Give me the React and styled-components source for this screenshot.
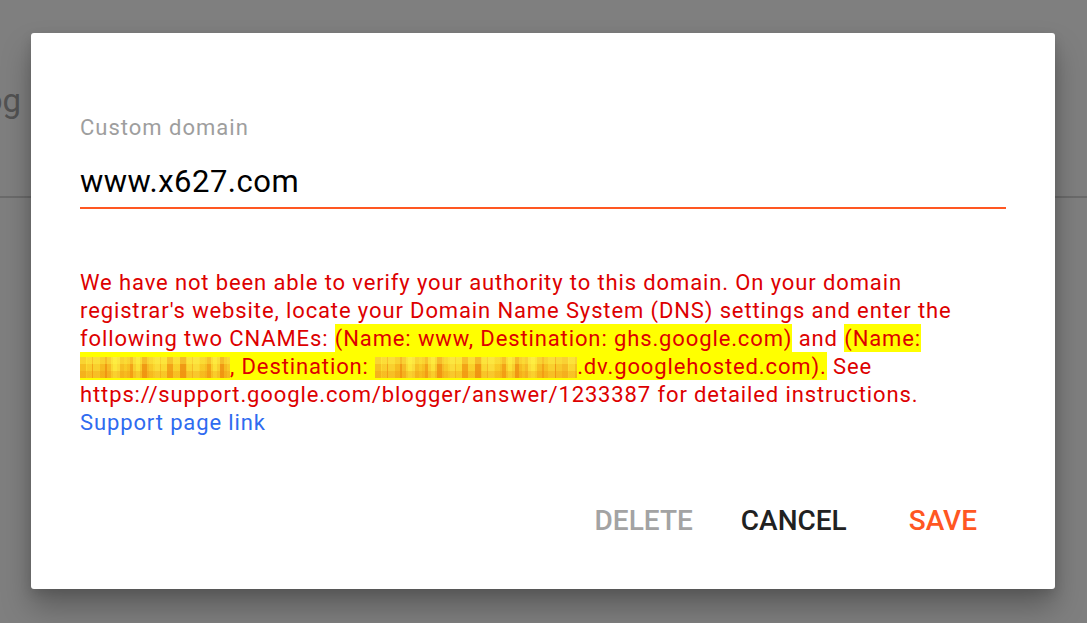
import React from "react";
import styled, { createGlobalStyle } from "styled-components";

const GlobalStyle = createGlobalStyle`
  html, body { margin: 0; padding: 0; }
  body {
    background: #ffffff;
    font-family: Roboto, "Noto Sans", "Liberation Sans", sans-serif;
    overflow: hidden;
  }
`;

const Page = styled.div`
  width: 1087px;
  height: 623px;
  background: #ffffff;
  position: relative;
  overflow: hidden;
`;

const PageHeader = styled.header`
  height: 196px;
  display: flex;
  align-items: center;
  border-bottom: 2px solid #d6d6d6;
`;

const PageTitle = styled.div`
  width: 21px;
  display: flex;
  justify-content: flex-end;
  overflow: hidden;
  white-space: nowrap;
  font-size: 33px;
  color: #a4a4a4;
  padding-top: 4px;
`;

const Scrim = styled.div`
  position: absolute;
  inset: 0;
  background: rgba(0, 0, 0, 0.5);
  display: flex;
  align-items: flex-start;
  padding: 33px 32px 0 31px;
`;

const Dialog = styled.div`
  width: 1024px;
  box-sizing: border-box;
  background: #ffffff;
  border-radius: 3px;
  padding: 82px 49px 50px;
  box-shadow: 0 18px 30px rgba(0, 0, 0, 0.28), 0 4px 12px rgba(0, 0, 0, 0.12);
  display: flex;
  flex-direction: column;
`;

const Label = styled.label`
  font-size: 22px;
  line-height: 26px;
  letter-spacing: 1px;
  color: #9e9e9e;
`;

const Input = styled.input`
  margin-top: 23px;
  height: 36px;
  padding: 0 0 7px;
  border: none;
  border-bottom: 2px solid #ff5722;
  outline: none;
  font-family: inherit;
  font-size: 31px;
  line-height: 36px;
  letter-spacing: 0.5px;
  color: #000000;
  background: transparent;
  box-sizing: content-box;
`;

const ErrorText = styled.div`
  margin-top: 60px;
  font-size: 22px;
  line-height: 28px;
  letter-spacing: 0.88px;
  color: #dd0000;
`;

const Highlight = styled.span`
  background: #ffff00;
  padding: 2px 0 1px;
  -webkit-box-decoration-break: clone;
  box-decoration-break: clone;
`;

const Redacted = styled.span`
  display: inline-block;
  width: ${(p) => p.$width}px;
  height: 21px;
  vertical-align: -4px;
  background:
    repeating-linear-gradient(
      180deg,
      rgba(255, 250, 80, 0.35) 0 7px,
      rgba(255, 255, 255, 0) 7px 14px,
      rgba(240, 140, 10, 0.25) 14px 21px
    ),
    repeating-linear-gradient(
      90deg,
      rgba(255, 255, 0, 0) 0 6px,
      rgba(255, 240, 60, 0.55) 6px 12px,
      rgba(255, 255, 0, 0) 12px 19px,
      rgba(250, 210, 40, 0.6) 19px 25px
    ),
    repeating-linear-gradient(
      90deg,
      #f6bf22 0 7px,
      #f3a417 7px 13px,
      #f9d02e 13px 20px,
      #f09a14 20px 27px,
      #f6bb25 27px 33px,
      #fbdc38 33px 40px
    );
`;

const Link = styled.a`
  display: block;
  color: #2f6bf0;
  text-decoration: none;
`;

const Actions = styled.div`
  margin-top: 66px;
  display: flex;
  justify-content: flex-end;
  align-items: center;
  padding-right: 29px;
`;

const ActionButton = styled.button`
  border: none;
  background: none;
  padding: 0;
  margin-left: ${(p) => p.$gap}px;
  font-family: inherit;
  font-size: 28px;
  font-weight: 500;
  line-height: 36px;
  color: ${(p) => p.$color};
  cursor: pointer;
`;

export default function App() {
  return (
    <>
      <GlobalStyle />
      <Page>
        <PageHeader>
          <PageTitle>Blog</PageTitle>
        </PageHeader>
        <Scrim>
          <Dialog>
            <Label htmlFor="domain">Custom domain</Label>
            <Input id="domain" defaultValue="www.x627.com" />
            <ErrorText>
              We have not been able to verify your authority to this domain. On your domain
              registrar's website, locate your Domain Name System (DNS) settings and enter the
              following two CNAMEs: <Highlight>(Name: www, Destination: ghs.google.com)</Highlight>{" "}
              and{" "}
              <Highlight>
                (Name: <Redacted $width={150} />, Destination: <Redacted $width={202} />
                .dv.googlehosted.com).
              </Highlight>{" "}
              See https://support.google.com/blogger/answer/1233387 for detailed instructions.
              <Link href="#">Support page link</Link>
            </ErrorText>
            <Actions>
              <ActionButton $color="#a3a3a3" $gap={0}>DELETE</ActionButton>
              <ActionButton $color="#212121" $gap={48}>CANCEL</ActionButton>
              <ActionButton $color="#ff5722" $gap={62}>SAVE</ActionButton>
            </Actions>
          </Dialog>
        </Scrim>
      </Page>
    </>
  );
}
